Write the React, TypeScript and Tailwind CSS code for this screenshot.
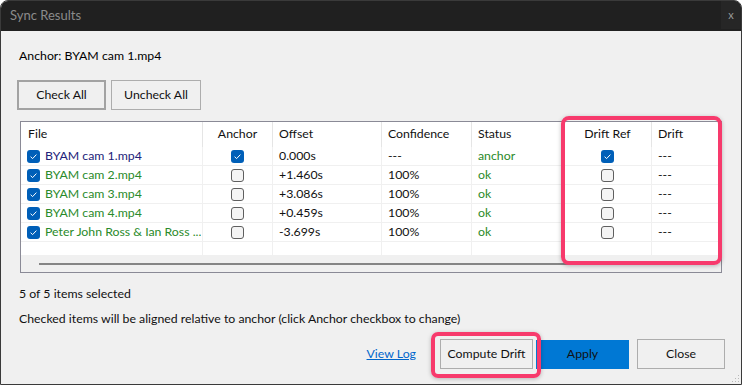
import React from "react";

interface Row {
  file: string;
  fileColor: string;
  anchor: boolean;
  offset: string;
  confidence: string;
  status: string;
  driftRef: boolean;
  drift: string;
}

const rows: Row[] = [
  { file: "BYAM cam 1.mp4", fileColor: "text-[#22227a]", anchor: true, offset: "0.000s", confidence: "---", status: "anchor", driftRef: true, drift: "---" },
  { file: "BYAM cam 2.mp4", fileColor: "text-[#2a8a2a]", anchor: false, offset: "+1.460s", confidence: "100%", status: "ok", driftRef: false, drift: "---" },
  { file: "BYAM cam 3.mp4", fileColor: "text-[#2a8a2a]", anchor: false, offset: "+3.086s", confidence: "100%", status: "ok", driftRef: false, drift: "---" },
  { file: "BYAM cam 4.mp4", fileColor: "text-[#2a8a2a]", anchor: false, offset: "+0.459s", confidence: "100%", status: "ok", driftRef: false, drift: "---" },
  { file: "Peter John Ross & Ian Ross ...", fileColor: "text-[#2a8a2a]", anchor: false, offset: "-3.699s", confidence: "100%", status: "ok", driftRef: false, drift: "---" },
];

const cols = "grid grid-cols-[182px_70px_109px_90px_92px_88px_69px]";

const Check = ({ on }: { on: boolean }) =>
  on ? (
    <span className="flex h-[13px] w-[13px] shrink-0 items-center justify-center rounded-[3px] bg-[#005fb8]">
      <svg width="13" height="13" viewBox="0 0 13 13">
        <path d="M3.6 6.7 L5.6 8.6 L9.4 4.6" fill="none" stroke="white" strokeWidth="1" />
      </svg>
    </span>
  ) : (
    <span className="block h-[13px] w-[13px] shrink-0 rounded-[3px] border border-[#5f5f5f] bg-[#f4f4f4]" />
  );

const Cell = ({ children, className = "" }: { children?: React.ReactNode; className?: string }) => (
  <div className={`flex h-[19px] items-center border-b border-r border-[#f0f0f0] ${className}`}>{children}</div>
);

export default function App() {
  return (
    <div className="flex h-[385px] w-[742px] flex-col overflow-hidden rounded-t-[8px] border border-[#3a3a3a] bg-[#f0f0f0] font-[family-name:Lato,sans-serif] text-[12.3px] text-[#111]">
      <div className="flex h-[30px] shrink-0 items-center justify-between bg-[#202020] pl-[9px]">
        <span className="text-[13px] text-[#8b8b8b]">Sync Results</span>
        <span className="flex h-[28px] w-[20px] items-center justify-center self-start bg-[#262626] text-[11px] text-[#9a9a9a]">x</span>
      </div>

      <div className="flex flex-1 flex-col px-[16px]">
        <div className="mt-[17px] pl-[2px] leading-[16px] text-black">Anchor: BYAM cam 1.mp4</div>

        <div className="mt-[16px] flex gap-[5px]">
          <button className="h-[30px] w-[89px] border-2 border-[#a3a3a3] bg-[#f0f0f0]">Check All</button>
          <button className="h-[30px] w-[90px] border border-[#adadad] bg-[#f0f0f0]">Uncheck All</button>
        </div>

        <div className="relative ml-[3px] mt-[11px] w-[702px] border border-[#8a8a96] bg-white">
          <div className={`${cols} h-[25px]`}>
            <div className="flex items-center border-r border-[#e5e5e5] pl-[7px]">File</div>
            <div className="flex items-center justify-center border-r border-[#e5e5e5]">Anchor</div>
            <div className="flex items-center border-r border-[#e5e5e5] pl-[6px]">Offset</div>
            <div className="flex items-center border-r border-[#e5e5e5] pl-[6px]">Confidence</div>
            <div className="flex items-center border-r border-[#e5e5e5] pl-[6px]">Status</div>
            <div className="flex items-center justify-center border-r border-[#e5e5e5]">Drift Ref</div>
            <div className="flex items-center pl-[6px]">Drift</div>
          </div>

          {rows.map((r) => (
            <div key={r.file} className={cols}>
              <Cell className="gap-[5px] pl-[6px]">
                <Check on={true} />
                <span className={`truncate ${r.fileColor}`}>{r.file}</span>
              </Cell>
              <Cell className="justify-center">
                <Check on={r.anchor} />
              </Cell>
              <Cell className="pl-[6px]">{r.offset}</Cell>
              <Cell className="pl-[6px]">{r.confidence}</Cell>
              <Cell className="pl-[6px] text-[#2a8a2a]">{r.status}</Cell>
              <Cell className="justify-center">
                <Check on={r.driftRef} />
              </Cell>
              <Cell className="pl-[6px]">{r.drift}</Cell>
            </div>
          ))}

          <div className={`${cols} h-[13px]`}>
            <div className="border-r border-[#f0f0f0]" />
            <div className="border-r border-[#f0f0f0]" />
            <div className="border-r border-[#f0f0f0]" />
            <div className="border-r border-[#f0f0f0]" />
            <div className="border-r border-[#f0f0f0]" />
            <div className="border-r border-[#f0f0f0]" />
            <div />
          </div>

          <div className="flex h-[17px] items-center bg-[#f0f0f0] pl-[18px] pr-[20px]">
            <div className="h-[2px] flex-1 bg-[#858585]" />
          </div>

          <div className="pointer-events-none absolute left-[540px] top-[-6px] h-[149px] w-[161px] rounded-[8px] border-[4px] border-[#f73a6c] shadow-[0_1px_4px_rgba(0,0,0,0.25)]" />
        </div>

        <div className="mt-[13px] pl-[2px] leading-[16px]">5 of 5 items selected</div>
        <div className="mt-[9px] pl-[2px] leading-[16px]">Checked items will be aligned relative to anchor (click Anchor checkbox to change)</div>

        <div className="mt-[12px] flex items-center justify-end">
          <a className="mr-[24px] text-[#0066cc] underline">View Log</a>
          <div className="relative">
            <button className="h-[30px] w-[93px] border border-[#adadad] bg-[#f0f0f0]">Compute Drift</button>
            <div className="pointer-events-none absolute bottom-[-9px] left-[-9px] right-[-8px] top-[-7px] rounded-[7px] border-[4px] border-[#f73a6c] shadow-[0_1px_4px_rgba(0,0,0,0.25)]" />
          </div>
          <button className="ml-[3px] h-[29px] w-[93px] bg-[#0078d4]">Apply</button>
          <button className="ml-[8px] h-[30px] w-[88px] border border-[#adadad] bg-[#f0f0f0]">Close</button>
        </div>
      </div>

      <div className="flex justify-end pb-[1px] pr-[1px]">
        <svg width="9" height="9" viewBox="0 0 9 9">
          <rect x="7" y="1" width="1" height="1" fill="#b8b8b8" />
          <rect x="4" y="4" width="1" height="1" fill="#b8b8b8" />
          <rect x="7" y="4" width="1" height="1" fill="#b8b8b8" />
          <rect x="1" y="7" width="1" height="1" fill="#b8b8b8" />
          <rect x="4" y="7" width="1" height="1" fill="#b8b8b8" />
          <rect x="7" y="7" width="1" height="1" fill="#b8b8b8" />
        </svg>
      </div>
    </div>
  );
}
